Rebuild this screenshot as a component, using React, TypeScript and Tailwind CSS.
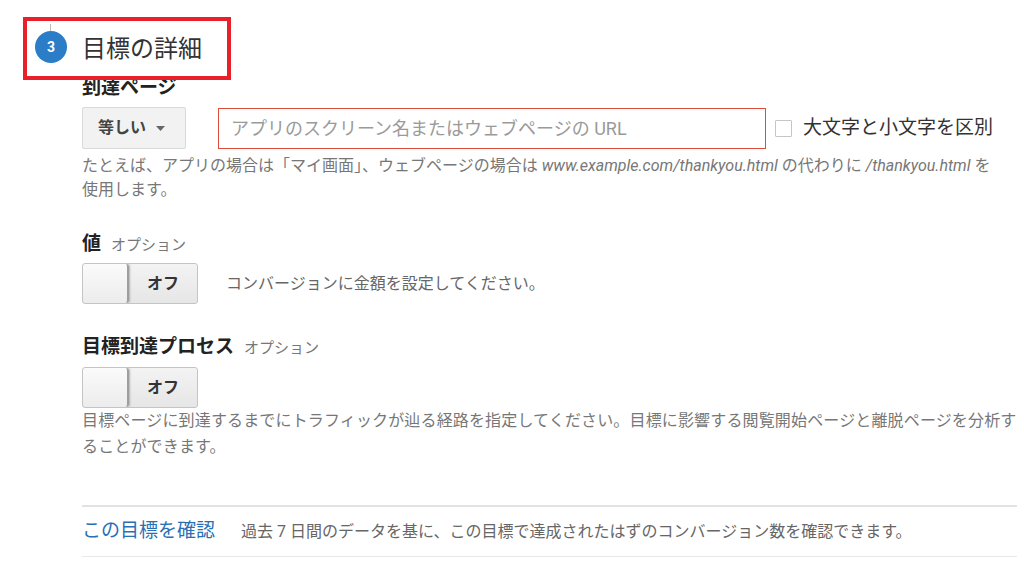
import React from "react";

function Toggle() {
  return (
    <div className="flex h-[41px] w-[116px] rounded-[3px] border border-[#c4c4c4] bg-gradient-to-b from-[#f3f3f3] to-[#e6e6e6] overflow-hidden">
      <div className="w-[46px] h-full rounded-[3px] border-r-2 border-[#9e9e9e] bg-gradient-to-b from-[#fbfbfb] to-[#ececec] shadow-[1px_0_2px_rgba(0,0,0,0.25)]" />
      <div className="flex-1 flex items-center justify-center text-[16px] font-bold text-[#333]">
        オフ
      </div>
    </div>
  );
}

export default function App() {
  return (
    <div
      className="relative w-[1024px] h-[567px] overflow-hidden bg-white text-[#333]"
      style={{ fontFamily: 'Roboto, "Noto Sans CJK JP", "Noto Sans", sans-serif' }}
    >
      {/* header */}
      <div className="flex items-start pl-[35px] pt-[31px]">
        <div className="relative w-[32px] h-[32px] rounded-full bg-[#2a7dc6] flex items-center justify-center text-white text-[14px] font-bold">
          <div className="absolute left-[15px] top-[-7px] w-[1px] h-[7px] bg-[#bdbdbd]" />
          3
        </div>
        <div className="ml-[15px] pt-[2px] text-[24px] leading-[32px] text-[#333]">目標の詳細</div>
      </div>

      <div className="pl-[82px] pr-[7px]">
        <div className="mt-[11px] text-[19px] leading-[24px] font-bold text-[#222]">到達ページ</div>

        <div className="mt-[7px] flex items-center h-[42px]">
          <div className="flex items-center h-[42px] w-[104px] rounded-[2px] border border-[#d9d9d9] bg-[#f2f2f2] pl-[15px] text-[16px] font-bold text-[#444]">
            等しい
            <svg className="ml-[10px]" width="9" height="5" viewBox="0 0 9 5">
              <path d="M0 0 L9 0 L4.5 5 Z" fill="#666" />
            </svg>
          </div>
          <div className="ml-[32px] flex items-center h-[41px] w-[548px] border border-[#dd4b39] pl-[12px] text-[18px] text-[#9a9a9a]">
            アプリのスクリーン名またはウェブページの URL
          </div>
          <div className="ml-[9px] w-[17px] h-[17px] border border-[#c6c6c6] rounded-[1px] bg-white" />
          <div className="ml-[11px] text-[19px] text-[#333]">大文字と小文字を区別</div>
        </div>

        <div className="mt-[5px] text-[16px] leading-[24px] text-[#777] whitespace-nowrap">
          たとえば、アプリの場合は「マイ画面」、ウェブページの場合は <i>www.example.com/thankyou.html</i> の代わりに <i>/thankyou.html</i> を
          <br />
          使用します。
        </div>

        <div className="mt-[30px] flex items-baseline leading-[24px]">
          <span className="text-[19px] font-bold text-[#222]">値</span>
          <span className="ml-[10px] text-[15px] text-[#777]">オプション</span>
        </div>

        <div className="mt-[6px] flex items-center">
          <Toggle />
          <div className="ml-[28px] text-[16px] text-[#666]">コンバージョンに金額を設定してください。</div>
        </div>

        <div className="mt-[31px] flex items-baseline leading-[24px]">
          <span className="text-[19px] font-bold text-[#222]">目標到達プロセス</span>
          <span className="ml-[10px] text-[15px] text-[#777]">オプション</span>
        </div>

        <div className="mt-[7px]">
          <Toggle />
        </div>

        <div className="text-[16px] leading-[26px] text-[#777] whitespace-nowrap tracking-[0.15px]">
          目標ページに到達するまでにトラフィックが辿る経路を指定してください。目標に影響する閲覧開始ページと離脱ページを分析す
          <br />
          ることができます。
        </div>

        <div className="mt-[45px] border-t-2 border-[#e2e2e2]" />
        <div className="flex items-center h-[49px]">
          <span className="text-[19px] text-[#2a6fb5]">この目標を確認</span>
          <span className="ml-[26px] text-[16px] text-[#666]">
            過去 7 日間のデータを基に、この目標で達成されたはずのコンバージョン数を確認できます。
          </span>
        </div>
        <div className="border-t border-[#e8e8e8]" />
      </div>

      {/* annotation box */}
      <div className="absolute left-[23px] top-[17px] w-[208px] h-[63px] border-[4px] border-[#e8202a]" />
    </div>
  );
}
